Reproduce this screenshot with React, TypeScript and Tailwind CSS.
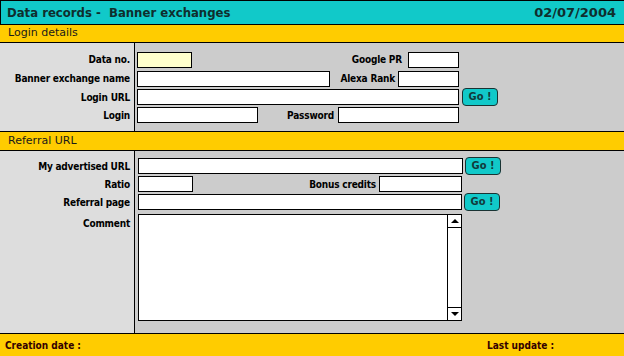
import React from "react";

const F = "font-['DejaVu_Sans_Condensed','DejaVu_Sans',sans-serif]";
const W = "font-['DejaVu_Sans',sans-serif]";

function Row({ label, h, children, top }: { label?: string; h: string; children?: React.ReactNode; top?: boolean }) {
  return (
    <div className={`flex ${h}`}>
      <div
        className={`w-[135px] shrink-0 bg-[#dddddd] border-r border-black pr-[4px] flex justify-end text-[10px] font-bold text-black tracking-[-0.2px] ${top ? "items-start pt-[2px]" : "items-center"}`}
      >
        {label}
      </div>
      <div className="flex-1 flex items-center">{children}</div>
    </div>
  );
}

function Input({ w, bg = "bg-white" }: { w: string; bg?: string }) {
  return <div className={`${w} h-[16px] ${bg} border border-black shrink-0`} />;
}

function Go({ ml }: { ml: string }) {
  return (
    <div
      className={`${ml} w-[36px] h-[18px] bg-[#11c9c9] border border-[#1a3333] rounded-[4px] flex items-center justify-center text-[11px] font-bold text-[#123a3a] shrink-0`}
    >
      Go !
    </div>
  );
}

function Lbl({ children, mr }: { children: React.ReactNode; mr: string }) {
  return <div className={`${mr} text-[10px] font-bold text-black whitespace-nowrap tracking-[-0.2px]`}>{children}</div>;
}

export default function App() {
  return (
    <div className={`w-[624px] h-[356px] bg-[#cccccc] flex flex-col overflow-hidden ${F}`}>
      {/* Title */}
      <div className="h-[25px] shrink-0 bg-[#11c9c9] border-t border-l border-b border-black flex items-center justify-between pl-[6px] pr-[8px]">
        <div className="text-[13px] font-bold text-[#0f2e2e] whitespace-pre">Data records -  Banner exchanges</div>
        <div className={`text-[13px] font-bold text-[#0f2e2e] ${W}`}>02/07/2004</div>
      </div>
      {/* Login details band */}
      <div className={`h-[18px] shrink-0 bg-[#ffcc00] border-b border-black flex items-center pl-[8px] text-[11px] text-[#1a1a1a] ${W}`}>
        Login details
      </div>
      {/* Section 1 */}
      <div className="h-[88px] shrink-0 flex flex-col">
        <Row h="h-[7px]" />
        <Row label="Data no." h="h-[19px]">
          <div className="ml-[2px] w-[322px] flex items-center">
            <Input w="w-[55px]" bg="bg-[#ffffcc]" />
            <div className="flex-1" />
            <Lbl mr="mr-[6px]">Google PR</Lbl>
            <Input w="w-[51px]" />
          </div>
        </Row>
        <Row label="Banner exchange name" h="h-[19px]">
          <div className="ml-[2px] w-[322px] flex items-center">
            <Input w="w-[193px]" />
            <div className="flex-1" />
            <Lbl mr="mr-[3px]">Alexa Rank</Lbl>
            <Input w="w-[61px]" />
          </div>
        </Row>
        <Row label="Login URL" h="h-[18px]">
          <div className="ml-[2px] w-[322px] flex items-center">
            <Input w="w-[322px]" />
          </div>
          <Go ml="ml-[3px]" />
        </Row>
        <Row label="Login" h="h-[18px]">
          <div className="ml-[2px] w-[322px] flex items-center">
            <Input w="w-[121px]" />
            <div className="flex-1" />
            <Lbl mr="mr-[4px]">Password</Lbl>
            <Input w="w-[121px]" />
          </div>
        </Row>
        <div className="flex flex-1">
          <div className="w-[135px] bg-[#dddddd] border-r border-black" />
        </div>
      </div>
      {/* Referral band */}
      <div className={`h-[20px] shrink-0 bg-[#ffcc00] border-t border-b border-black flex items-center pl-[8px] text-[11px] text-[#1a1a1a] ${W}`}>
        Referral URL
      </div>
      {/* Section 2 */}
      <div className="flex-1 flex flex-col">
        <Row h="h-[6px]" />
        <Row label="My advertised URL" h="h-[18px]">
          <div className="ml-[3px] w-[325px] flex items-center">
            <Input w="w-[325px]" />
          </div>
          <Go ml="ml-[2px]" />
        </Row>
        <Row label="Ratio" h="h-[18px]">
          <div className="ml-[3px] w-[324px] flex items-center">
            <Input w="w-[55px]" />
            <div className="flex-1" />
            <Lbl mr="mr-[3px]">Bonus credits</Lbl>
            <Input w="w-[83px]" />
          </div>
        </Row>
        <Row label="Referral page" h="h-[18px]">
          <div className="ml-[3px] w-[324px] flex items-center">
            <Input w="w-[324px]" />
          </div>
          <Go ml="ml-[2px]" />
        </Row>
        <Row h="h-[3px]" />
        <Row label="Comment" h="h-[107px]" top>
          <div className="ml-[3px] w-[324px] h-[107px] self-start bg-white border border-black flex">
            <div className="flex-1" />
            <div className="w-[14px] border-l border-black flex flex-col justify-between">
              <div className="h-[13px] border-b border-black flex items-center justify-center">
                <div className="w-0 h-0 border-l-[4px] border-r-[4px] border-b-[4px] border-l-transparent border-r-transparent border-b-black" />
              </div>
              <div className="h-[13px] border-t border-black flex items-center justify-center">
                <div className="w-0 h-0 border-l-[4px] border-r-[4px] border-t-[4px] border-l-transparent border-r-transparent border-t-black" />
              </div>
            </div>
          </div>
        </Row>
        <div className="flex flex-1">
          <div className="w-[135px] bg-[#dddddd] border-r border-black" />
        </div>
      </div>
      {/* Footer */}
      <div className="h-[23px] shrink-0 bg-[#ffcc00] border-t border-black flex items-center text-[10px] font-bold text-[#330000]">
        <div className="pl-[5px] w-[487px]">Creation date :</div>
        <div>Last update :</div>
      </div>
    </div>
  );
}
